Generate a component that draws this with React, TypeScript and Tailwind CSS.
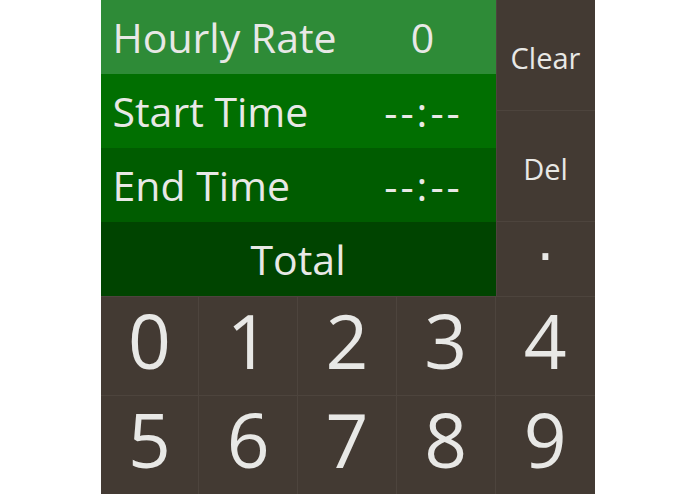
import React from 'react';

const rows = [
  { label: 'Hourly Rate', value: '0', bg: 'bg-[#2e8b37]', time: false },
  { label: 'Start Time', value: '--:--', bg: 'bg-[#016f01]', time: true },
  { label: 'End Time', value: '--:--', bg: 'bg-[#005c00]', time: true },
];

const digits = ['0', '1', '2', '3', '4', '5', '6', '7', '8', '9'];

export default function App() {
  return (
    <div
      className="flex justify-center bg-white min-h-screen"
      style={{ fontFamily: '"Open Sans", "Noto Sans", sans-serif' }}
    >
      <div className="w-[494px] h-[494px] flex flex-col bg-[#433a33] text-[#e8e8e6]">
        {/* Display + side keys */}
        <div className="flex h-[296px] shrink-0">
          <div className="w-[395px] flex flex-col">
            {rows.map((r) => (
              <div key={r.label} className={`h-[74px] flex items-center ${r.bg}`}>
                <div className="flex-1 pl-[12px] text-[41px] leading-none">{r.label}</div>
                <div
                  className={`w-[146px] text-center text-[41px] leading-none ${
                    r.time ? 'tracking-[3px] pl-[2px]' : ''
                  }`}
                >
                  {r.value}
                </div>
              </div>
            ))}
            <div className="h-[74px] flex items-center justify-center bg-[#004400] text-[41px] leading-none">
              Total
            </div>
          </div>
          <div className="flex-1 flex flex-col border-l border-[#4d443d]">
            <button className="h-[111px] shrink-0 flex items-center justify-center border-b border-[#4d443d] text-[29px] leading-none pt-[5px]">
              Clear
            </button>
            <button className="h-[111px] shrink-0 flex items-center justify-center border-b border-[#4d443d] text-[29px] leading-none pt-[5px]">
              Del
            </button>
            <button className="h-[74px] flex items-center justify-center">
              <span className="text-[56px] leading-none -mt-[36px] font-['DejaVu_Sans',sans-serif]">.</span>
            </button>
          </div>
        </div>

        {/* Number pad */}
        <div className="flex-1 grid grid-cols-5 grid-rows-2 border-t border-[#4d443d]">
          {digits.map((d, i) => (
            <button
              key={d}
              className={`flex items-center justify-center text-[75px] leading-none pb-[10px] ${
                i % 5 !== 4 ? 'border-r' : ''
              } ${i < 5 ? 'border-b' : ''} border-[#4d443d]`}
            >
              {d}
            </button>
          ))}
        </div>
      </div>
    </div>
  );
}
